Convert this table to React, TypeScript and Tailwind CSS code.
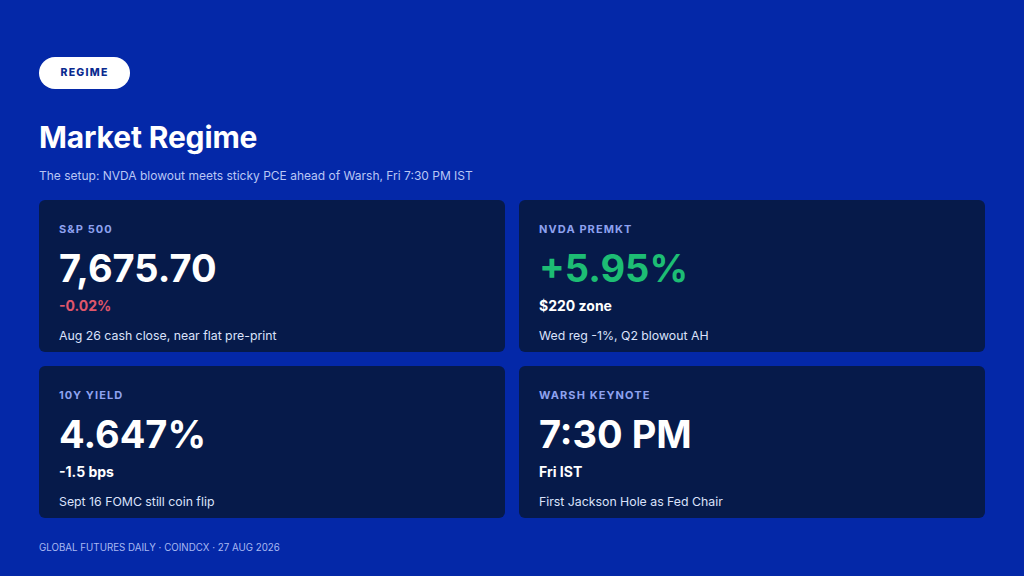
const cards = [
  {label: "S&P 500", value: "7,675.70", valueClass: "text-white", sub: "-0.02%", subClass: "text-[#e0566b]", note: "Aug 26 cash close, near flat pre-print"},
  {label: "NVDA PREMKT", value: "+5.95%", valueClass: "text-[#1dbd74]", sub: "$220 zone", subClass: "text-white", note: "Wed reg -1%, Q2 blowout AH"},
  {label: "10Y YIELD", value: "4.647%", valueClass: "text-white", sub: "-1.5 bps", subClass: "text-white", note: "Sept 16 FOMC still coin flip"},
  {label: "WARSH KEYNOTE", value: "7:30 PM", valueClass: "text-white", sub: "Fri IST", subClass: "text-white", note: "First Jackson Hole as Fed Chair"},
];

export default function App() {
  return (
    <div className="flex h-[576px] w-[1024px] flex-col bg-[#0428a8] px-[39px] pt-[57px] font-['Inter',sans-serif] text-white">
      <span className="flex h-8 w-[91px] items-center justify-center rounded-full bg-white text-[10.5px] font-extrabold tracking-[0.12em] text-[#0a2a8f]">
        REGIME
      </span>
      <h1 className="mt-[31px] text-[30px] font-bold leading-[34px] tracking-[-0.005em]">Market Regime</h1>
      <p className="mt-[13px] text-[12px] text-[#b9c6f5]">
        The setup: NVDA blowout meets sticky PCE ahead of Warsh, Fri 7:30 PM IST
      </p>
      <div className="mt-[15px] grid grid-cols-2 gap-[14px]">
        {cards.map((c) => (
          <div key={c.label} className="flex h-[152px] flex-col rounded-md bg-[#061a4a] px-[20px] pt-[21px]">
            <span className="text-[11px] font-bold tracking-[0.1em] text-[#8ea2f0]">{c.label}</span>
            <span className={`mt-[6px] text-[38px] font-bold leading-[48px] ${c.valueClass}`}>{c.value}</span>
            <span className={`mt-[3px] text-[14px] font-bold ${c.subClass}`}>{c.sub}</span>
            <span className="mt-[11px] text-[12.3px] text-[#dbe2fb]">{c.note}</span>
          </div>
        ))}
      </div>
      <p className="mt-[22px] text-[9.75px] leading-[15px] text-[#a9b8f2]">GLOBAL FUTURES DAILY · COINDCX · 27 AUG 2026</p>
    </div>
  );
}
